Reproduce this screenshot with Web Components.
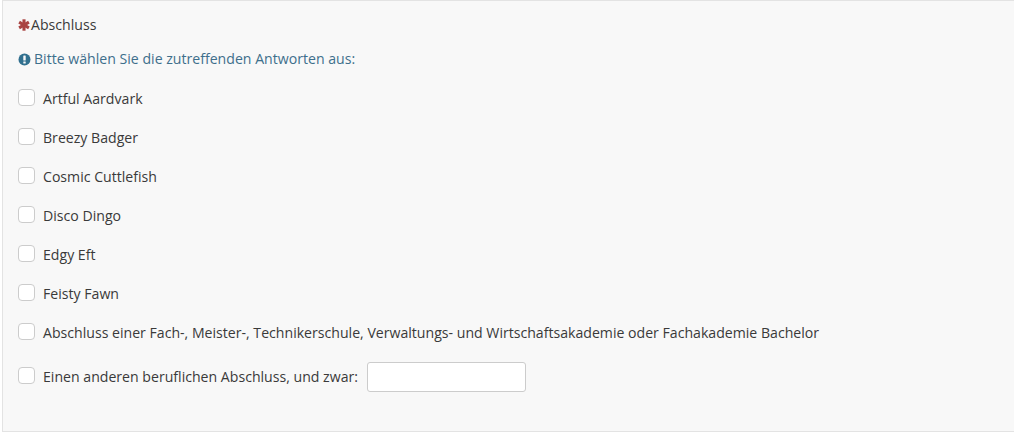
<!DOCTYPE html>
<html lang="de"><head><meta charset="utf-8">
<style>html,body{margin:0;padding:0;background:#fff}body{font-family:"Open Sans",sans-serif;font-size:14.12px;color:#3a3a3a}</style>
</head><body>
<template id="t-panel"><style>
:host{display:block;box-sizing:border-box;width:1012px;height:432px;margin-left:2px;background:#f8f8f8;border:1px solid #e3e3e3;border-right:0;padding:14px 0 0 15px}
.q{display:flex;align-items:center;height:20px;line-height:20px}
.star{width:12px;height:12px;margin-right:1px;display:block;flex:none}
.hint{display:flex;align-items:center;height:20px;line-height:20px;margin-top:14px;color:#3e6f8c}
.hint svg{width:13px;height:13px;margin-right:3px;display:block;flex:none}
.list{display:flex;flex-direction:column;gap:19px;margin-top:20px}
</style>
<div class="q"><svg class="star" viewBox="0 0 12 12"><g stroke="#a94442" stroke-width="3.1" fill="none"><path d="M6 .3v11.4"/><path d="M1.1 3.2l9.8 5.6"/><path d="M10.9 3.2l-9.8 5.6"/></g></svg><slot name="label"></slot></div>
<div class="hint"><svg viewBox="0 0 13 13"><circle cx="6.5" cy="6.5" r="6" fill="#31708f"/><rect x="5.3" y="2.4" width="2.4" height="5" rx=".5" fill="#f8f8f8"/><rect x="5.3" y="8.4" width="2.4" height="2.2" rx=".4" fill="#f8f8f8"/></svg><slot name="hint"></slot></div>
<div class="list"><slot></slot></div>
</template>
<template id="t-opt"><style>
:host{display:flex;align-items:center;min-height:20px;line-height:20px}
.box{box-sizing:border-box;width:17px;height:17px;flex:none;margin:0 8px 3px 0;background:#fff;border:1px solid #ccc;border-radius:4px}
</style><span class="box"></span><slot></slot></template>
<template id="t-input"><style>
:host{display:block;box-sizing:border-box;width:159px;height:30px;margin-left:9px;background:#fff;border:1px solid #ccc;border-radius:3px}
</style></template>
<x-panel>
<span slot="label">Abschluss</span>
<span slot="hint">Bitte wählen Sie die zutreffenden Antworten aus:</span>
<x-opt>Artful Aardvark</x-opt>
<x-opt>Breezy Badger</x-opt>
<x-opt>Cosmic Cuttlefish</x-opt>
<x-opt>Disco Dingo</x-opt>
<x-opt>Edgy Eft</x-opt>
<x-opt>Feisty Fawn</x-opt>
<x-opt>Abschluss einer Fach-, Meister-, Technikerschule, Verwaltungs- und Wirtschaftsakademie oder Fachakademie Bachelor</x-opt>
<x-opt>Einen anderen beruflichen Abschluss, und zwar:<x-field></x-field></x-opt>
</x-panel>
<script>
function def(name,id){customElements.define(name,class extends HTMLElement{constructor(){super();this.attachShadow({mode:'open'}).appendChild(document.getElementById(id).content.cloneNode(true));}});}
def('x-panel','t-panel');def('x-opt','t-opt');def('x-field','t-input');
</script>
</body></html>
